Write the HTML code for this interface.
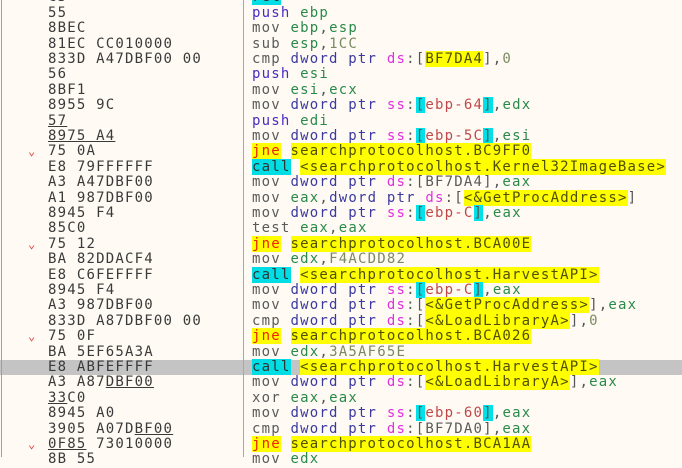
<!DOCTYPE html>
<html><head><meta charset="utf-8"><style>
html,body{margin:0;padding:0;}
body{width:682px;height:457px;overflow:hidden;background:#fffbf4;position:relative;font-family:"DejaVu Sans Mono","Liberation Mono",monospace;font-size:14px;letter-spacing:1.2px;}
.lb{position:absolute;left:1px;top:0;width:1px;height:457px;background:#a0a0a0;}
.sep{position:absolute;left:243px;top:0;width:1px;height:457px;background:#a8a8a8;}
.hl{position:absolute;left:0;top:360px;width:682px;height:15px;background:#c4c4c4;}
.r{position:absolute;left:0;height:15.4px;line-height:15.4px;white-space:pre;}
.h{position:absolute;left:48px;color:#3a3a3a;}
.a{position:absolute;left:28px;color:#e04040;font-size:12px;letter-spacing:0;}
.d{position:absolute;left:252px;color:#555;}
.u{text-decoration:underline;}
.m{color:#5a5a5a}
.p{color:#4a2ac0}
.g{color:#2a8a4a}
.w{color:#3a3aa0}
.s{color:#e030e0}
.c{background:#00e0e8}
.x{color:#c04848}
.n{color:#7a8a60}
.y{background:#ffff00;color:#505000}
.j{background:#ffff00;color:#f02000}
.k{background:#00dde4;color:#333}
</style></head><body>
<div class="hl"></div>
<div class="lb"></div>
<div class="sep"></div>

<div class="r" style="top:-9.7px"><span class="h">C3</span><span class="d"><span class="k">ret</span></span></div>
<div class="r" style="top:5.7px"><span class="h">55</span><span class="d"><span class="p">push</span> <span class="g">ebp</span></span></div>
<div class="r" style="top:21.1px"><span class="h">8BEC</span><span class="d"><span class="m">mov</span> <span class="g">ebp</span>,<span class="g">esp</span></span></div>
<div class="r" style="top:36.5px"><span class="h">81EC CC010000</span><span class="d"><span class="m">sub</span> <span class="g">esp</span>,<span class="n">1CC</span></span></div>
<div class="r" style="top:51.9px"><span class="h">833D A47DBF00 00</span><span class="d"><span class="m">cmp</span> <span class="w">dword ptr</span> <span class="s">ds</span>:[<span class="y">BF7DA4</span>],<span class="n">0</span></span></div>
<div class="r" style="top:67.3px"><span class="h">56</span><span class="d"><span class="p">push</span> <span class="g">esi</span></span></div>
<div class="r" style="top:82.7px"><span class="h">8BF1</span><span class="d"><span class="m">mov</span> <span class="g">esi</span>,<span class="g">ecx</span></span></div>
<div class="r" style="top:98.1px"><span class="h">8955 9C</span><span class="d"><span class="m">mov</span> <span class="w">dword ptr</span> <span class="s">ss</span>:<span class="c">[</span><span class="x">ebp-64</span><span class="c">]</span>,<span class="g">edx</span></span></div>
<div class="r" style="top:113.5px"><span class="h u">57</span><span class="d"><span class="p">push</span> <span class="g">edi</span></span></div>
<div class="r" style="top:128.9px"><span class="h u">8975 A4</span><span class="d"><span class="m">mov</span> <span class="w">dword ptr</span> <span class="s">ss</span>:<span class="c">[</span><span class="x">ebp-5C</span><span class="c">]</span>,<span class="g">esi</span></span></div>
<div class="r" style="top:144.3px"><span class="a">&#8964;</span><span class="h">75 0A</span><span class="d"><span class="j">jne</span> <span class="y">searchprotocolhost.BC9FF0</span></span></div>
<div class="r" style="top:159.7px"><span class="h">E8 79FFFFFF</span><span class="d"><span class="k">call</span> <span class="y">&lt;searchprotocolhost.Kernel32ImageBase&gt;</span></span></div>
<div class="r" style="top:175.1px"><span class="h">A3 A47DBF00</span><span class="d"><span class="m">mov</span> <span class="w">dword ptr</span> <span class="s">ds</span>:[<span class="m">BF7DA4</span>],<span class="g">eax</span></span></div>
<div class="r" style="top:190.5px"><span class="h">A1 987DBF00</span><span class="d"><span class="m">mov</span> <span class="g">eax</span>,<span class="w">dword ptr</span> <span class="s">ds</span>:[<span class="y">&lt;&amp;GetProcAddress&gt;</span>]</span></div>
<div class="r" style="top:205.9px"><span class="h">8945 F4</span><span class="d"><span class="m">mov</span> <span class="w">dword ptr</span> <span class="s">ss</span>:<span class="c">[</span><span class="x">ebp-C</span><span class="c">]</span>,<span class="g">eax</span></span></div>
<div class="r" style="top:221.3px"><span class="h">85C0</span><span class="d"><span class="m">test</span> <span class="g">eax</span>,<span class="g">eax</span></span></div>
<div class="r" style="top:236.7px"><span class="a">&#8964;</span><span class="h">75 12</span><span class="d"><span class="j">jne</span> <span class="y">searchprotocolhost.BCA00E</span></span></div>
<div class="r" style="top:252.1px"><span class="h">BA 82DDACF4</span><span class="d"><span class="m">mov</span> <span class="g">edx</span>,<span class="n">F4ACDD82</span></span></div>
<div class="r" style="top:267.5px"><span class="h">E8 C6FEFFFF</span><span class="d"><span class="k">call</span> <span class="y">&lt;searchprotocolhost.HarvestAPI&gt;</span></span></div>
<div class="r" style="top:282.9px"><span class="h">8945 F4</span><span class="d"><span class="m">mov</span> <span class="w">dword ptr</span> <span class="s">ss</span>:<span class="c">[</span><span class="x">ebp-C</span><span class="c">]</span>,<span class="g">eax</span></span></div>
<div class="r" style="top:298.3px"><span class="h">A3 987DBF00</span><span class="d"><span class="m">mov</span> <span class="w">dword ptr</span> <span class="s">ds</span>:[<span class="y">&lt;&amp;GetProcAddress&gt;</span>],<span class="g">eax</span></span></div>
<div class="r" style="top:313.7px"><span class="h">833D A87DBF00 00</span><span class="d"><span class="m">cmp</span> <span class="w">dword ptr</span> <span class="s">ds</span>:[<span class="y">&lt;&amp;LoadLibraryA&gt;</span>],<span class="n">0</span></span></div>
<div class="r" style="top:329.1px"><span class="a">&#8964;</span><span class="h">75 0F</span><span class="d"><span class="j">jne</span> <span class="y">searchprotocolhost.BCA026</span></span></div>
<div class="r" style="top:344.5px"><span class="h">BA 5EF65A3A</span><span class="d"><span class="m">mov</span> <span class="g">edx</span>,<span class="n">3A5AF65E</span></span></div>
<div class="r" style="top:359.9px"><span class="h">E8 ABFEFFFF</span><span class="d"><span class="k">call</span> <span class="y">&lt;searchprotocolhost.HarvestAPI&gt;</span></span></div>
<div class="r" style="top:375.3px"><span class="h">A3 A87<span class="u">DBF00</span></span><span class="d"><span class="m">mov</span> <span class="w">dword ptr</span> <span class="s">ds</span>:[<span class="y">&lt;&amp;LoadLibraryA&gt;</span>],<span class="g">eax</span></span></div>
<div class="r" style="top:390.7px"><span class="h"><span class="u">33</span>C0</span><span class="d"><span class="m">xor</span> <span class="g">eax</span>,<span class="g">eax</span></span></div>
<div class="r" style="top:406.1px"><span class="h">8945 A0</span><span class="d"><span class="m">mov</span> <span class="w">dword ptr</span> <span class="s">ss</span>:<span class="c">[</span><span class="x">ebp-60</span><span class="c">]</span>,<span class="g">eax</span></span></div>
<div class="r" style="top:421.5px"><span class="h">3905 A07D<span class="u">BF00</span></span><span class="d"><span class="m">cmp</span> <span class="w">dword ptr</span> <span class="s">ds</span>:[<span class="m">BF7DA0</span>],<span class="g">eax</span></span></div>
<div class="r" style="top:436.9px"><span class="a">&#8964;</span><span class="h"><span class="u">0F85</span> 73010000</span><span class="d"><span class="j">jne</span> <span class="y">searchprotocolhost.BCA1AA</span></span></div>
<div class="r" style="top:452.3px"><span class="h">8B 55</span><span class="d"><span class="m">mov</span> <span class="g">edx</span></span></div>
</body></html>
